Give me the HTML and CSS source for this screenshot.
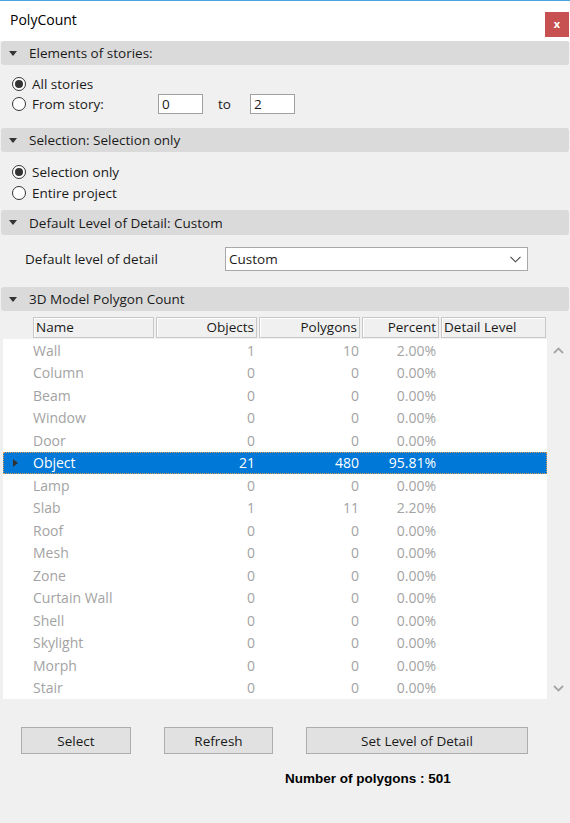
FILE: index.html
```html
<!DOCTYPE html>
<html>
<head>
<meta charset="utf-8">
<link rel="stylesheet" href="styles.css">
</head>
<body>
<div class="window">
  <div class="titlebar">
    <span class="title">PolyCount</span>
    <span class="close">x</span>
  </div>

  <div class="section-header"><span class="tri"></span>Elements of stories:</div>
  <div class="group g1">
    <div class="radio-row"><span class="radio on"></span><span>All stories</span></div>
    <div class="radio-row">
      <span class="radio-label"><span class="radio"></span><span>From story:</span></span>
      <span class="field">0</span>
      <span class="to">to</span>
      <span class="field">2</span>
    </div>
  </div>

  <div class="section-header s2"><span class="tri"></span>Selection: Selection only</div>
  <div class="group g2">
    <div class="radio-row r2"><span class="radio on"></span><span>Selection only</span></div>
    <div class="radio-row r2"><span class="radio"></span><span>Entire project</span></div>
  </div>

  <div class="section-header s3"><span class="tri"></span>Default Level of Detail: Custom</div>
  <div class="lod-row">
    <span class="lod-label">Default level of detail</span>
    <div class="select"><span>Custom</span>
      <svg class="chev" width="11" height="7" viewBox="0 0 11 7"><polyline points="0.5,0.8 5.5,5.8 10.5,0.8" fill="none" stroke="#444" stroke-width="1.1"/></svg>
    </div>
  </div>

  <div class="section-header s4"><span class="tri"></span>3D Model Polygon Count</div>
  <div class="table">
    <div class="thead">
      <div class="th left">Name</div>
      <div class="th">Objects</div>
      <div class="th">Polygons</div>
      <div class="th">Percent</div>
      <div class="th left">Detail Level</div>
    </div>
    <div class="tbody-wrap">
      <div class="tbody">
        <div class="tr"><span></span><span class="name">Wall</span><span class="num c1">1</span><span class="num c2">10</span><span class="num c3">2.00%</span><span></span></div>
        <div class="tr"><span></span><span class="name">Column</span><span class="num c1">0</span><span class="num c2">0</span><span class="num c3">0.00%</span><span></span></div>
        <div class="tr"><span></span><span class="name">Beam</span><span class="num c1">0</span><span class="num c2">0</span><span class="num c3">0.00%</span><span></span></div>
        <div class="tr"><span></span><span class="name">Window</span><span class="num c1">0</span><span class="num c2">0</span><span class="num c3">0.00%</span><span></span></div>
        <div class="tr"><span></span><span class="name">Door</span><span class="num c1">0</span><span class="num c2">0</span><span class="num c3">0.00%</span><span></span></div>
        <div class="tr sel"><span class="arrow"></span><span class="name">Object</span><span class="num c1">21</span><span class="num c2">480</span><span class="num c3">95.81%</span><span></span></div>
        <div class="tr"><span></span><span class="name">Lamp</span><span class="num c1">0</span><span class="num c2">0</span><span class="num c3">0.00%</span><span></span></div>
        <div class="tr"><span></span><span class="name">Slab</span><span class="num c1">1</span><span class="num c2">11</span><span class="num c3">2.20%</span><span></span></div>
        <div class="tr"><span></span><span class="name">Roof</span><span class="num c1">0</span><span class="num c2">0</span><span class="num c3">0.00%</span><span></span></div>
        <div class="tr"><span></span><span class="name">Mesh</span><span class="num c1">0</span><span class="num c2">0</span><span class="num c3">0.00%</span><span></span></div>
        <div class="tr"><span></span><span class="name">Zone</span><span class="num c1">0</span><span class="num c2">0</span><span class="num c3">0.00%</span><span></span></div>
        <div class="tr"><span></span><span class="name">Curtain Wall</span><span class="num c1">0</span><span class="num c2">0</span><span class="num c3">0.00%</span><span></span></div>
        <div class="tr"><span></span><span class="name">Shell</span><span class="num c1">0</span><span class="num c2">0</span><span class="num c3">0.00%</span><span></span></div>
        <div class="tr"><span></span><span class="name">Skylight</span><span class="num c1">0</span><span class="num c2">0</span><span class="num c3">0.00%</span><span></span></div>
        <div class="tr"><span></span><span class="name">Morph</span><span class="num c1">0</span><span class="num c2">0</span><span class="num c3">0.00%</span><span></span></div>
        <div class="tr"><span></span><span class="name">Stair</span><span class="num c1">0</span><span class="num c2">0</span><span class="num c3">0.00%</span><span></span></div>
      </div>
      <div class="scrollbar">
        <svg width="11" height="7" viewBox="0 0 11 7"><polyline points="1,6 5.5,1.5 10,6" fill="none" stroke="#a6a6a6" stroke-width="1.8"/></svg>
        <svg width="11" height="7" viewBox="0 0 11 7"><polyline points="1,1 5.5,5.5 10,1" fill="none" stroke="#a6a6a6" stroke-width="1.8"/></svg>
      </div>
    </div>
  </div>

  <div class="buttons">
    <div class="btn b-select">Select</div>
    <div class="btn b-refresh">Refresh</div>
    <div class="btn b-lod">Set Level of Detail</div>
  </div>
  <div class="total">Number of polygons : 501</div>
</div>
</body>
</html>
```

FILE: styles.css
```css
* { box-sizing: border-box; }
html, body { margin: 0; padding: 0; }
body {
  font-family: "Open Sans", "Noto Sans", sans-serif;
  font-size: 13.5px;
  color: #1a1a1a;
  background: #f0f0f0;
}
.window {
  width: 570px;
  height: 823px;
  overflow: hidden;
  background: #f0f0f0;
  display: flex;
  flex-direction: column;
}
.titlebar {
  height: 41px;
  background: #fff;
  border-top: 1px solid #4aa5dc;
  display: flex;
  align-items: flex-start;
  justify-content: space-between;
  padding-left: 10px;
}
.title {
  font-size: 14px;
  margin-top: 9px;
  color: #000;
}
.close {
  width: 24px;
  height: 25px;
  margin-top: 11px;
  margin-right: 1px;
  background: #c75050;
  color: #fff;
  font-size: 11px;
  font-weight: bold;
  display: flex;
  align-items: center;
  justify-content: center;
  padding-bottom: 2px;
}
.section-header {
  height: 24px;
  margin: 0 1px;
  background: #dadada;
  border-radius: 3px;
  display: flex;
  align-items: center;
  padding-left: 8px;
  color: #1a1a1a;
}
.tri {
  width: 0;
  height: 0;
  border-left: 4px solid transparent;
  border-right: 4px solid transparent;
  border-top: 5px solid #333;
  margin-right: 12px;
}
.s2 { margin-top: 14px; }
.s3 { margin-top: 7px; height: 25px; }
.s4 { margin-top: 16px; }
.group { padding-left: 12px; }
.g1 { padding-top: 9px; }
.g2 { padding-top: 9px; }
.radio-row {
  height: 20px;
  display: flex;
  align-items: center;
}
.r2 { height: 21px; }
.radio-label {
  display: flex;
  align-items: center;
  width: 146px;
}
.radio {
  width: 14px;
  height: 14px;
  border: 1px solid #333;
  border-radius: 50%;
  background: #fff;
  margin-right: 6px;
  display: flex;
  align-items: center;
  justify-content: center;
}
.radio.on::after {
  content: "";
  width: 8px;
  height: 8px;
  border-radius: 50%;
  background: #333;
}
.field {
  width: 45px;
  height: 20px;
  border: 1px solid #a0a0a0;
  background: #fff;
  padding-left: 3px;
  line-height: 18px;
}
.to { margin: 0 19px 0 15px; }
.lod-row {
  margin-top: 12px;
  height: 24px;
  display: flex;
  align-items: center;
  padding-left: 25px;
}
.lod-label { width: 200px; }
.select {
  width: 303px;
  height: 24px;
  border: 1px solid #a8a8a8;
  background: #fff;
  display: flex;
  align-items: center;
  justify-content: space-between;
  padding: 0 6px 0 3px;
}
.chev { margin-top: 1px; }
.table { margin-top: 6px; }
.thead {
  height: 21px;
  display: grid;
  grid-template-columns: 121px 101px 101px 77px 105px;
  column-gap: 2px;
  padding-left: 33px;
}
.th {
  border: 1px solid #c8c8c8;
  box-shadow: inset 1px 1px 0 #fff;
  text-align: right;
  padding: 0 2px;
  line-height: 19px;
  color: #1a1a1a;
}
.th.left { text-align: left; }
.tbody-wrap {
  display: flex;
  margin-top: 1px;
}
.tbody {
  width: 544px;
  margin-left: 3px;
  background: #fff;
  height: 360px;
}
.tr {
  height: 22.5px;
  display: grid;
  grid-template-columns: 30px 122px 102px 102px 80px 108px;
  align-items: center;
  color: #a3a3a3;
  font-size: 14px;
}
.name { padding-left: 0; }
.num { text-align: right; }
.c1 { padding-right: 2px; }
.c2 { padding-right: 0; }
.c3 { padding-right: 3px; }
.tr.sel {
  background: #0078d7;
  color: #fff;
  outline: 1px dotted #e0a050;
  outline-offset: -1px;
}
.arrow {
  width: 0;
  height: 0;
  border-top: 4px solid transparent;
  border-bottom: 4px solid transparent;
  border-left: 5px solid #333;
  margin-left: 10px;
}
.scrollbar {
  width: 23px;
  height: 360px;
  display: flex;
  flex-direction: column;
  justify-content: space-between;
  align-items: center;
  padding: 8px 0 7px;
}
.buttons {
  margin-top: 28px;
  display: flex;
  padding-left: 21px;
}
.btn {
  height: 27px;
  background: #e1e1e1;
  border: 1px solid #adadad;
  display: flex;
  align-items: center;
  justify-content: center;
  color: #1a1a1a;
}
.b-select { width: 110px; }
.b-refresh { width: 109px; margin-left: 33px; }
.b-lod { width: 222px; margin-left: 33px; }
.total {
  margin-top: 17px;
  padding-left: 285px;
  font-family: "Liberation Sans", Arial, sans-serif;
  font-weight: bold;
  font-size: 13.5px;
  color: #000;
}
```
